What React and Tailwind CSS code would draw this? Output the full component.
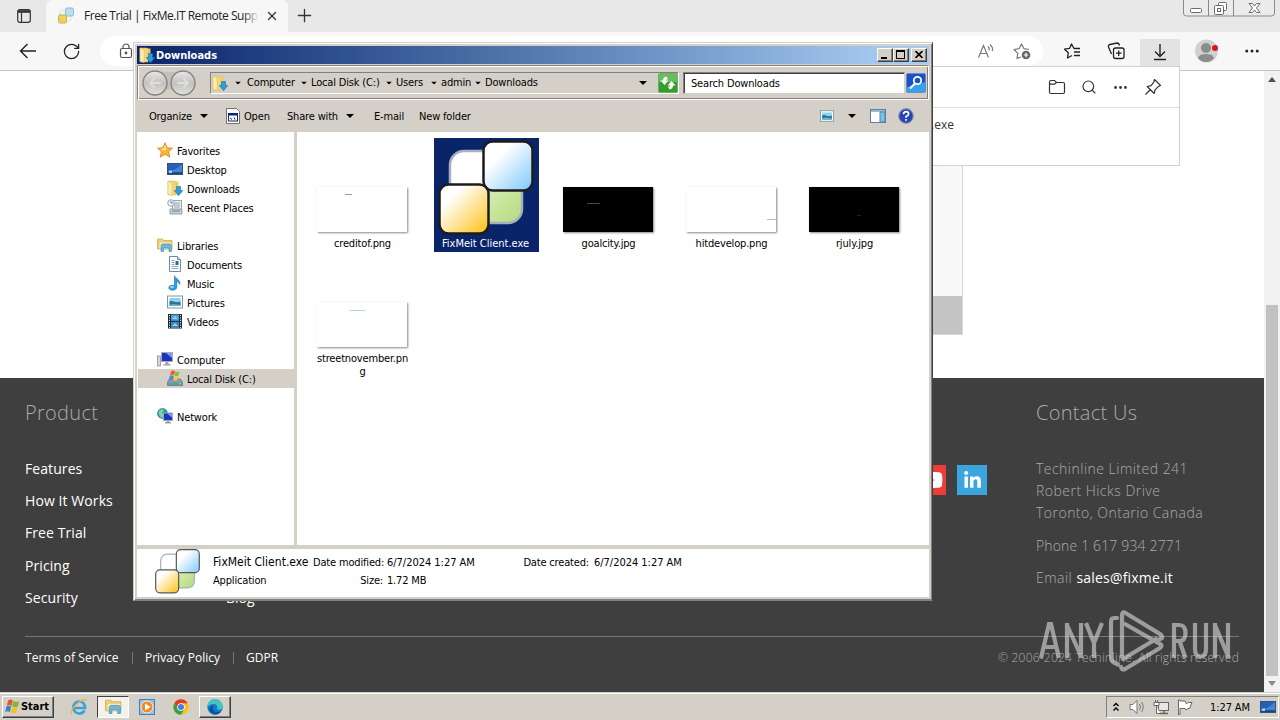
import { RotateCw, X, Plus, Search, Ellipsis } from 'lucide-react';
import { FaLinkedinIn, FaYoutube } from 'react-icons/fa';

const UI = "font-['DejaVu_Sans_Condensed','DejaVu_Sans',sans-serif] [font-stretch:condensed] text-[11px] tracking-[-0.170px] leading-[13px] whitespace-nowrap text-black";
const RAISED = 'border border-t-white border-l-white border-r-[#404040] border-b-[#404040] shadow-[inset_-1px_-1px_0_#808080] bg-[#d4d0c8]';

/* ---------- icons ---------- */

function FixMeLogo({ className, id, dark = '#1c1c1c' }) {
  return (
    <svg viewBox="0 0 96 96" className={className}>
      <defs>
        <linearGradient id={`${id}-b`} x1="0" y1="0" x2="1" y2="1">
          <stop offset=".3" stopColor="#fff" />
          <stop offset="1" stopColor="#7cc8fa" />
        </linearGradient>
        <linearGradient id={`${id}-y`} x1="0" y1="0" x2="1" y2="1">
          <stop offset=".25" stopColor="#fff" />
          <stop offset="1" stopColor="#fcc010" />
        </linearGradient>
        <linearGradient id={`${id}-g`} x1="0" y1="0" x2="1" y2="1">
          <stop offset=".5" stopColor="#fff" />
          <stop offset=".52" stopColor="#d8edb4" />
          <stop offset="1" stopColor="#b4da7c" />
        </linearGradient>
      </defs>
      <rect x="12" y="11" width="72" height="72" rx="14" fill={`url(#${id}-g)`} stroke="#a9aec0" strokeWidth="2.5" />
      <rect x="45.5" y="1.5" width="49" height="49" rx="9" fill={`url(#${id}-b)`} stroke={dark} strokeWidth="2.5" />
      <rect x="1.5" y="44.5" width="49" height="49" rx="9" fill={`url(#${id}-y)`} stroke={dark} strokeWidth="2.5" />
    </svg>
  );
}

function TabLogo() {
  return (
    <svg viewBox="0 0 18 18" className="size-[18px]">
      <rect x="3" y="3" width="11" height="11" rx="2" fill="#f3f5ee" stroke="#e0e3dc" />
      <rect x="8.500" y="1" width="8" height="8" rx="1.500" fill="#b9def1" stroke="#91bdd3" />
      <rect x="1.500" y="8" width="8" height="8" rx="1.500" fill="#f3d05c" stroke="#c9b055" />
    </svg>
  );
}

function DownloadsIcon() {
  return (
    <svg viewBox="0 0 16 16" className="size-4">
      <path d="M1 1h7l1 1v13H1z" fill="#f3d675" stroke="#d9b95f" strokeWidth=".6" />
      <path d="M1 1l4 2v12.500L1 14z" fill="#fdeeb0" stroke="#dfc472" strokeWidth=".6" />
      <path d="M8.500 1.500h3V9h-3z" fill="#edcd6b" />
      <path d="M9.500 6.500h4v4h2.300L11.500 15.700 7.300 10.500h2.200z" fill="#2f9be0" stroke="#1b6fb0" strokeWidth=".6" />
    </svg>
  );
}

function StarIcon() {
  return (
    <svg viewBox="0 0 16 16" className="size-4">
      <path d="M8 .8l2.200 4.900 5.300.5-4 3.600 1.300 5.300L8 12.300l-4.800 2.800 1.300-5.300-4-3.600 5.300-.5z" fill="#fbb634" stroke="#d87a14" strokeWidth=".8" />
      <path d="M8 3l1.400 3.600L8 9 3.500 7l3-.4z" fill="#fde293" />
    </svg>
  );
}

function DesktopIcon() {
  return (
    <svg viewBox="0 0 16 16" className="size-4">
      <rect x=".5" y="2.500" width="15" height="11" fill="#2560b8" stroke="#3a4f78" />
      <path d="M1 10C6 10 11 7 15 3v8H1z" fill="#3f86d4" />
      <path d="M1 11.500h14v1.500H1z" fill="#20427e" />
      <path d="M2 9.500h3v2.500H2z" fill="#a9cdf0" />
    </svg>
  );
}

function RecentIcon() {
  return (
    <svg viewBox="0 0 16 16" className="size-4">
      <rect x="5.500" y="1.500" width="9" height="11" fill="#eef2f5" stroke="#9ca6af" />
      <path d="M7 4h6M7 6h6M7 8h6" stroke="#8fa0b0" />
      <path d="M3 10h12v5H3z" fill="#c6d0d7" stroke="#808d97" strokeWidth=".8" />
      <path d="M5 12h8" stroke="#6d7c87" />
      <circle cx="4" cy="4" r="3.300" fill="#eef3f8" stroke="#9ca9b5" />
      <path d="M4 2v2h2" stroke="#567" fill="none" strokeWidth=".8" />
    </svg>
  );
}

function LibrariesIcon({ className = 'size-4' }) {
  return (
    <svg viewBox="0 0 16 16" className={className}>
      <path d="M.5 2h5l1 1.500h8.500V12H.5z" fill="#f2d272" stroke="#c9a646" strokeWidth=".7" />
      <path d="M2 5h12.500v7H2z" fill="#fbedb0" stroke="#d7b95f" strokeWidth=".5" />
      <path d="M4 9.500c0-2 1-2.500 2-2.500h6c1.500 0 2.500.5 2.500 2.500V14.500h-2.500V11H6.500v3.500H4z" fill="#6bb7dd" stroke="#3d86ad" strokeWidth=".6" />
    </svg>
  );
}

function DocumentsIcon() {
  return (
    <svg viewBox="0 0 16 16" className="size-4">
      <path d="M2.500.5h8l3 3v12h-11z" fill="#fff" stroke="#75879a" />
      <path d="M10.500.5v3h3" fill="#d9e4ee" stroke="#75879a" />
      <path d="M4.500 4.500h3M4.500 6.500h3M4.500 8.500h3M4.500 10.500h7M4.500 12.500h7" stroke="#8fabc4" />
      <rect x="8.500" y="5" width="3" height="4" fill="#2768a8" />
    </svg>
  );
}

function MusicIcon() {
  return (
    <svg viewBox="0 0 16 16" className="size-4">
      <path d="M7.500.8c1 3.200 6 3.400 5.300 8.700-.6-1.800-1.800-2.600-3-2.800v5.500c0 3.800-8 4-8 .6 0-2.600 3.500-3 5.700-2.200z" fill="#2f9be4" stroke="#1a6cb4" strokeWidth=".6" />
      <ellipse cx="5" cy="12" rx="2" ry="1.100" fill="#a5dafa" />
    </svg>
  );
}

function PicturesIcon({ className = 'size-4' }) {
  return (
    <svg viewBox="0 0 16 16" className={className}>
      <rect x=".5" y="2" width="15" height="12" fill="#fff" stroke="#7d97a8" />
      <rect x="2.500" y="4" width="11" height="8" fill="#8ed0ef" />
      <path d="M2.500 7.500c3-2 6 2.500 11 0V12h-11z" fill="#2c7597" />
      <path d="M2.500 10.800c4-1.500 7 0 11 0V12h-11z" fill="#70b9d0" />
    </svg>
  );
}

function VideosIcon() {
  return (
    <svg viewBox="0 0 16 16" className="size-4">
      <rect x="1" y="1" width="14" height="14.500" fill="#1f2a33" />
      <rect x="4" y="1.500" width="8" height="6.300" fill="#4f9fd4" />
      <rect x="4" y="8.800" width="8" height="6.300" fill="#3c88c0" />
      <path d="M5 6l3-3 3 3zM5 13l3-3 3 3z" fill="#8fd0ee" />
      <path d="M2.500 2v13M13.500 2v13" stroke="#dfe8ee" strokeDasharray="1.200 1.200" />
    </svg>
  );
}

function ComputerIcon() {
  return (
    <svg viewBox="0 0 16 16" className="size-4">
      <rect x=".5" y="5" width="3" height="10" fill="#d4d6da" stroke="#85898f" strokeWidth=".7" />
      <rect x="4.500" y="1.500" width="11" height="9" fill="#1d34c0" stroke="#a9acb5" />
      <path d="M9 2h6v5z" fill="#7d9cf3" />
      <path d="M8.500 11h3v2h2v1.500h-7V13h2z" fill="#9fa2a8" />
    </svg>
  );
}

function DiskIcon() {
  return (
    <svg viewBox="0 0 16 16" className="size-4">
      <path d="M2.500 9h11l2 3v3.500H.5V12z" fill="#8e9ca4" stroke="#54626a" strokeWidth=".6" />
      <path d="M1 12.500h14v2.500H1z" fill="#5d9cab" />
      <path d="M12 13.700h2" stroke="#7cf06c" />
      <path d="M4 1.200c1.500-1 2.500-1 4 0L7 5.200c-1.500-1-2.500-1-4 0z" fill="#ec5a24" />
      <path d="M8.500 1.500c1.500 1 2.500 1 4 0l-1 4c-1.500 1-2.500 1-4 0z" fill="#85bd36" />
      <path d="M2.800 6c1.500-1 2.500-1 4 0l-1 3.800c-1.500-1-2.500-1-4 0z" fill="#3f8de0" />
      <path d="M7.300 6.300c1.500 1 2.500 1 4 0l-1 3.700c-1.500 1-2.500 1-4 0z" fill="#fbc729" />
    </svg>
  );
}

function NetworkIcon() {
  return (
    <svg viewBox="0 0 16 16" className="size-4">
      <circle cx="5.500" cy="5.500" r="5" fill="#2b98b8" stroke="#1f6d93" strokeWidth=".6" />
      <path d="M2 3c2-2 4-2 5-1L5 5l2 2-2 3C3 9 1 6 2 3z" fill="#7fd59a" />
      <rect x="6.500" y="5" width="9" height="7.500" fill="#1d34c0" stroke="#a9acb5" />
      <path d="M10 5.500h5v4z" fill="#7d9cf3" />
      <path d="M9.500 13h3v1h1.500v1.500h-6V14h1.500z" fill="#9fa2a8" />
    </svg>
  );
}

function Caret({ className = '' }) {
  return (
    <svg viewBox="0 0 8 4" className={`h-1 w-2 ${className}`}>
      <path d="M0 0h8L4 4z" fill="#000" />
    </svg>
  );
}

function WindowsFlag({ className }) {
  return (
    <svg viewBox="0 0 16 16" className={className}>
      <path d="M3.300 1.500c2-1.300 3.500-1 5 0L7 7.300c-1.500-1-3-1.200-5 0z" fill="#ea5426" />
      <path d="M8.800 2c1.600 1 3.500 1.300 6.500.2L13.800 8c-2 1-4.300.9-6.200-.2z" fill="#7fba35" />
      <path d="M1.500 8c2-1.200 3.600-1 5 0l-1.300 5.800c-1.500-1-3-1.200-5 0z" fill="#2f84dc" />
      <path d="M7.300 8.500c1.600 1 3.700 1.200 6 .2L12 14.500c-2 1-4 .9-6-.2z" fill="#fbbf1d" />
    </svg>
  );
}

/* ---------- browser ---------- */

function TabStrip() {
  return (
    <div className="flex h-8 bg-[#e8e8e8]">
      <div className="flex w-[46px] items-center justify-center rounded-br-md pl-[2px]">
        <svg viewBox="0 0 14 14" className="size-[14px]" fill="none" stroke="#333" strokeWidth="1.200">
          <rect x=".7" y=".7" width="12.600" height="12.600" rx="2" />
          <path d="M1 2.500h12" strokeWidth="2.600" />
          <path d="M4.500 3v10" />
        </svg>
      </div>
      <div className="flex w-[242px] items-center rounded-t-md bg-[#f7f7f7] pl-[11px]">
        <TabLogo />
        <div className="relative ml-[9px] w-[175px] font-['Open_Sans',sans-serif] text-[12px] tracking-[-0.470px] whitespace-nowrap text-[#222]">
          Free Trial | FixMe.IT Remote Supp
          <div className="absolute inset-y-0 right-0 w-4 bg-gradient-to-r from-transparent to-[#f7f7f7]" />
        </div>
        <X className="ml-[6px] size-[14px] text-[#333]" strokeWidth={2.200} />
      </div>
      <Plus className="mt-[5px] ml-[6px] size-[21px] text-[#333]" strokeWidth={1.500} />
      <svg viewBox="0 0 94 18" className="mr-[4px] ml-auto h-[18px] w-[94px]" fill="none" stroke="#6b6b6b">
        <path d="M1.500 0v13q0 3 3 3h85q3 0 3-3V0M26.500 0v16M51.500 0v16" fill="#ebebeb" stroke="#8a8a8a" />
        <rect x="8.500" y="8.500" width="11" height="4" rx="1" fill="#fff" />
        <rect x="36.500" y="2.500" width="8" height="8" rx="1" fill="#fff" />
        <rect x="32.500" y="5.500" width="9" height="9" rx="1" fill="#fff" />
        <rect x="35.500" y="8.500" width="3" height="3" />
        <path d="M67 3.500h3.500l2 2.500 2-2.500H78l-3.500 4.500 3.500 4.500h-3.500l-2-2.500-2 2.500H67l3.500-4.500z" fill="#fff" />
      </svg>
    </div>
  );
}

function Toolbar() {
  return (
    <div className="flex h-[39px] items-center border-b border-[#c4c4c4] bg-[#f7f7f7]">
      <svg viewBox="0 0 18 16" className="ml-[19px] h-4 w-[18px]" fill="none" stroke="#222" strokeWidth="1.400">
        <path d="M17 8H1.500M8.500 1L1.500 8l7 7" />
      </svg>
      <RotateCw className="ml-[25px] size-[19px] text-[#222]" strokeWidth={1.600} />
      <div className="ml-[19px] flex h-[30px] w-[943px] items-center rounded-full bg-white">
        <svg viewBox="0 0 14 16" className="ml-[19px] h-4 w-[14px]" fill="none" stroke="#555" strokeWidth="1.200">
          <rect x="1.500" y="5.500" width="11" height="9" rx="1.500" />
          <path d="M4 5.500V4a3 3 0 016 0v1.500" />
          <circle cx="7" cy="10" r=".8" fill="#555" />
        </svg>
        <svg viewBox="0 0 18 16" className="ml-auto h-4 w-[18px]" fill="none" stroke="#777" strokeWidth="1.200">
          <path d="M1.500 14.500L6.500 2.500l5 12M3.200 10.500h6.600M11 3.500q1.700 1.500 1.200 4M13 1.500q3.500 3 2.300 6.500" />
        </svg>
        <svg viewBox="0 0 18 18" className="mr-[12px] ml-[18px] size-[18px]" fill="none" stroke="#777" strokeWidth="1.200">
          <path d="M8 15l-4 1.500.8-5.200L1 7.500l5-.8L8.500 2 11 6.700l5 .8" strokeLinejoin="round" />
          <circle cx="13" cy="13" r="4.300" fill="#666" stroke="none" />
          <path d="M13 10.800v4.400M10.800 13h4.400" stroke="#fff" />
        </svg>
      </div>
      <svg viewBox="0 0 18 18" className="ml-[20px] size-[18px]" fill="none" stroke="#222" strokeWidth="1.300" strokeLinejoin="round">
        <path d="M9 13.500l-4.500 2.500.8-5.200L1.500 7.200l5-.8L8.500 2 11 6.500h6M11 10h6M11 13.500h6" />
      </svg>
      <svg viewBox="0 0 18 18" className="ml-[26px] size-[18px]" fill="none" stroke="#222" strokeWidth="1.300">
        <rect x="6.500" y="6" width="10.500" height="10.500" rx="2" />
        <path d="M11.700 8.500v5.500M9 11.200h5.500M4.500 12L1.500 5q-.5-2 1.500-2.500L10 1q2 0 2.500 2.500" />
      </svg>
      <div className="ml-[15px] flex h-[31px] w-10 items-center justify-center self-end bg-[#e3e3e3] pb-[6px]">
        <svg viewBox="0 0 14 18" className="h-[18px] w-[14px]" fill="none" stroke="#222" strokeWidth="1.400">
          <path d="M7 1v12M2 8.500l5 5 5-5M1 16.500h12" />
        </svg>
      </div>
      <svg viewBox="0 0 24 24" className="ml-[15px] size-6">
        <circle cx="11.500" cy="12" r="11.500" fill="#d0d0d0" />
        <circle cx="11" cy="9" r="5" fill="#8c8c8c" />
        <path d="M3 19q1-4 8-4t8 4q-3 4-8 4t-8-4z" fill="#8c8c8c" />
        <circle cx="20" cy="9" r="3" fill="#e3131b" />
      </svg>
      <Ellipsis className="ml-[24px] size-[18px] text-[#222]" strokeWidth={2} />
    </div>
  );
}

function DownloadsFlyout() {
  return (
    <div className="absolute top-[66px] left-[820px] h-[100px] w-[360px] border border-[#d0d0d0] bg-white">
      <div className="flex h-[41px] items-center justify-end gap-[15px] border-b border-[#dedede] pr-[17px] text-[#333]">
        <svg viewBox="0 0 18 16" className="h-4 w-[18px]" fill="none" stroke="#333" strokeWidth="1.200">
          <path d="M1.500 4V3q0-1.500 1.500-1.500h3.500L8.500 3.500H15q1.500 0 1.500 1.500v8q0 1.500-1.500 1.500H3q-1.500 0-1.500-1.500zM1.500 5.200h5l2-1.700" />
        </svg>
        <Search className="size-[16px]" strokeWidth={1.700} />
        <Ellipsis className="size-[17px]" strokeWidth={2} />
        <svg viewBox="0 0 18 18" className="size-[18px]" fill="none" stroke="#333" strokeWidth="1.200" strokeLinejoin="round">
          <path d="M10.500 1.500l6 6-2.500 1.300-3 3-.8 3.700-7-7 3.800-.8 2.500-3zM6.500 11.500l-5 5" />
        </svg>
      </div>
      <div className="pt-[8px] pl-[110px] font-['Open_Sans',sans-serif] text-[12px] text-[#333]">.exe</div>
    </div>
  );
}

const PRODUCT_LINKS = ['Features', 'How It Works', 'Free Trial', 'Pricing', 'Security'];

function Footer() {
  return (
    <footer className="h-[314px] bg-[#3f3f3f] px-[25px] font-['Open_Sans',sans-serif] font-light text-[#ababab]">
      <div className="flex h-[259px] border-b border-[#777] pt-[20px]">
        <div className="w-[201px]">
          <h3 className="text-[20px] leading-[30px] tracking-[0.300px]">Product</h3>
          <ul className="pt-[25px] text-[14px] leading-[32.200px] font-normal tracking-[0.080px] text-white">
            {PRODUCT_LINKS.map((l) => (
              <li key={l}>{l}</li>
            ))}
          </ul>
        </div>
        <div className="pt-[184px] text-[14px] leading-[32px] font-normal text-white">Blog</div>
        <div className="mt-[67px] mr-[49px] ml-auto flex gap-[11px]">
          <div className="flex size-[30px] items-center justify-center bg-[#ee3d36]">
            <FaYoutube className="size-[24px] text-white" />
          </div>
          <div className="flex size-[30px] items-center justify-center bg-[#3aa5de]">
            <FaLinkedinIn className="size-[19px] text-white" />
          </div>
        </div>
        <div className="w-[203px] text-[14px] tracking-[0.480px]">
          <h3 className="text-[20px] leading-[30px] tracking-[0.300px]">Contact Us</h3>
          <p className="pt-[30px] leading-[22px]">
            Techinline Limited 241
            <br />
            Robert Hicks Drive
            <br />
            Toronto, Ontario Canada
          </p>
          <p className="pt-[11px] leading-[22px] tracking-[0.150px]">Phone 1 617 934 2771</p>
          <p className="pt-[10px] leading-[22px]">
            Email <span className="font-normal tracking-[0.200px] text-white">sales@fixme.it</span>
          </p>
        </div>
      </div>
      <div className="flex h-[42px] items-center text-[12px] font-normal text-white">
        <span className="w-[107px] tracking-[0.080px]">Terms of Service</span>
        <span className="h-3 w-[13px] border-l border-[#777]" />
        <span className="w-[88px]">Privacy Policy</span>
        <span className="h-3 w-[13px] border-l border-[#777]" />
        <span>GDPR</span>
        <span className="ml-auto font-light tracking-[0.210px] text-[#ababab]">© 2006-2024 Techinline. All rights reserved</span>
      </div>
    </footer>
  );
}

function Page() {
  return (
    <div className="flex h-[621px]">
      <div className="flex w-[1264px] flex-col bg-white">
        <div className="h-[307px]">
          <div className="ml-[600px] flex h-[264px] w-[363px] flex-col justify-end border border-[#d6d6d6] bg-[#f9f9f9]">
            <div className="h-[38px] bg-[#c5c5c5]" />
          </div>
        </div>
        <Footer />
      </div>
      <div className="flex w-4 flex-col items-center bg-[#f2f2f2] pt-[6px]">
        <svg viewBox="0 0 8 5" className="h-[5px] w-2">
          <path d="M0 5L4 0l4 5z" fill="#505050" />
        </svg>
        <div className="mt-[223px] h-[371px] w-3 bg-[#c1c1c1]" />
        <svg viewBox="0 0 8 5" className="mt-[5px] h-[5px] w-2">
          <path d="M0 0l4 5 4-5z" fill="#888" />
        </svg>
      </div>
    </div>
  );
}

/* ---------- explorer window ---------- */

const CRUMBS = [
  { label: 'Computer', w: 'w-[64px]' },
  { label: 'Local Disk (C:)', w: 'w-[85px]' },
  { label: 'Users', w: 'w-[45px]' },
  { label: 'admin', w: 'w-[44px]' },
  { label: 'Downloads', w: 'w-[60px]' },
];

const TREE = [
  { label: 'Favorites', Icon: StarIcon, root: true },
  { label: 'Desktop', Icon: DesktopIcon },
  { label: 'Downloads', Icon: DownloadsIcon },
  { label: 'Recent Places', Icon: RecentIcon },
  null,
  { label: 'Libraries', Icon: LibrariesIcon, root: true },
  { label: 'Documents', Icon: DocumentsIcon },
  { label: 'Music', Icon: MusicIcon },
  { label: 'Pictures', Icon: PicturesIcon },
  { label: 'Videos', Icon: VideosIcon },
  null,
  { label: 'Computer', Icon: ComputerIcon, root: true },
  { label: 'Local Disk (C:)', Icon: DiskIcon, selected: true },
  null,
  { label: 'Network', Icon: NetworkIcon, root: true },
];

const FILES = [
  { name: 'creditof.png', bg: 'bg-white', mark: 'ml-[28px] mt-[7px] w-[7px] bg-[#999]' },
  { name: 'FixMeit Client.exe', app: true },
  { name: 'goalcity.jpg', bg: 'bg-black', mark: 'ml-[24px] mt-[16px] w-[13px] bg-[#484848]' },
  { name: 'hitdevelop.png', bg: 'bg-white', mark: 'ml-[81px] mt-[32px] w-[9px] bg-[#bbb]' },
  { name: 'rjuly.jpg', bg: 'bg-black', mark: 'ml-[48px] mt-[28px] w-[4px] bg-[#222]' },
  { name: 'streetnovember.png', bg: 'bg-white', mark: 'ml-[33px] mt-[8px] w-[15px] bg-[#b5d5d2]' },
];

function TitleBar() {
  return (
    <div className="flex h-[18px] items-center bg-gradient-to-r from-[#0a246a] to-[#a6caf0] to-95% pr-[2px] pl-[2px]">
      <DownloadsIcon />
      <span className="ml-[1px] pt-[2px] font-['DejaVu_Sans_Condensed','DejaVu_Sans',sans-serif] [font-stretch:condensed] text-[11px] font-bold tracking-[0px] text-white">Downloads</span>
      <div className="ml-auto flex">
        <div className={`h-[14px] w-4 ${RAISED}`}>
          <div className="mt-[8px] ml-[3px] h-[2px] w-[6px] bg-black" />
        </div>
        <div className={`h-[14px] w-4 ${RAISED}`}>
          <div className="mt-[1px] ml-[2px] h-[9px] w-[9px] border border-t-2 border-black" />
        </div>
        <div className={`ml-[2px] h-[14px] w-4 ${RAISED}`}>
          <svg viewBox="0 0 8 7" className="mt-[2px] ml-[3px] h-[7px] w-2">
            <path d="M.5 0l7 7M7.500 0l-7 7" stroke="#000" strokeWidth="1.600" />
          </svg>
        </div>
      </div>
    </div>
  );
}

function NavButtons() {
  return (
    <svg viewBox="0 0 56 28" className="h-[28px] w-[56px]">
      <defs>
        <linearGradient id="nav" x1="0" y1="0" x2="0" y2="1">
          <stop offset="0" stopColor="#e8e8e6" />
          <stop offset=".5" stopColor="#c2c1be" />
          <stop offset="1" stopColor="#e2e1de" />
        </linearGradient>
      </defs>
      <path d="M14 3h28v20q-14-5-28 0z" fill="#c3c1bc" />
      <circle cx="14" cy="14" r="12" fill="url(#nav)" stroke="#85847f" strokeWidth="1.400" />
      <circle cx="42" cy="14" r="12" fill="url(#nav)" stroke="#85847f" strokeWidth="1.400" />
      <path d="M20 14H9M13.500 9.500L9 14l4.500 4.500M36 14h11M42.500 9.500L47 14l-4.500 4.500" fill="none" stroke="#dededb" strokeWidth="2" />
    </svg>
  );
}

function AddressRow() {
  return (
    <div className="mt-[1px] flex h-[35px] items-center border border-[#808080] border-r-white border-b-white shadow-[inset_1px_1px_0_#fff,inset_-1px_-1px_0_#808080]">
      <div className="ml-[3px]">
        <NavButtons />
      </div>
      <div className="ml-[13px] flex h-[22px] w-[469px] items-center border border-[#808080] border-r-white border-b-white pl-[1px]">
        <DownloadsIcon />
        <Caret className="mr-[2px] ml-[6px] scale-75" />
        {CRUMBS.map((c, i) => (
          <div key={c.label} className={`flex items-center pl-[3px] ${c.w} ${UI}`}>
            {c.label}
            {i < CRUMBS.length - 1 && <Caret className="ml-auto scale-75" />}
          </div>
        ))}
        <Caret className="mr-[11px] ml-auto" />
        <svg viewBox="0 0 20 20" className="size-5">
          <rect x=".5" y=".5" width="19" height="19" rx="1.500" fill="#33a02c" stroke="#6fae6a" />
          <path d="M1 1h18v8H1z" fill="#68bd5d" />
          <path d="M8.500 3.500Q5 4 5 7.500H2.500L6.500 12l4-4.500H8V6.500h2zM11.500 16.500q3.500-.5 3.500-4h2.500L13.500 8l-4 4.500H12v1h-2z" fill="#fff" />
        </svg>
      </div>
      <div className={`ml-[4px] flex h-[22px] w-[222px] items-center border border-[#808080] border-r-[#d4d0c8] border-b-[#d4d0c8] bg-white pt-px pl-[7px] shadow-[inset_1px_1px_0_#404040] ${UI}`}>
        Search Downloads
      </div>
      <svg viewBox="0 0 20 20" className="ml-[1px] size-5">
        <rect x=".5" y=".5" width="19" height="19" rx="1.500" fill="#1a50c8" stroke="#6a8cc8" />
        <path d="M1 14q9-2 18-5v10H1z" fill="#35a2ea" />
        <circle cx="11.500" cy="7.500" r="3.700" fill="none" stroke="#fff" strokeWidth="1.800" />
        <path d="M9 10.500l-5 5" stroke="#fff" strokeWidth="2.200" />
      </svg>
    </div>
  );
}

function CommandBar() {
  return (
    <div className={`flex h-[31px] items-center pt-px pl-[12px] ${UI}`}>
      <span className="w-[51px]">Organize</span>
      <Caret />
      <svg viewBox="0 0 14 16" className="mr-[4px] ml-[18px] h-4 w-[14px]">
        <path d="M.5.5h10l3 3v12H.5z" fill="#fff" stroke="#70706c" />
        <rect x="2.500" y="5.500" width="9" height="7.500" fill="#fff" stroke="#10257c" />
        <path d="M2 6.500h10" stroke="#10257c" strokeWidth="2" />
        <path d="M4 10l2 1.500M8 9.500l1 2" stroke="#10257c" />
      </svg>
      <span className="w-[43px]">Open</span>
      <span className="w-[59px]">Share with</span>
      <Caret />
      <span className="ml-[20px] w-[45px]">E-mail</span>
      <span>New folder</span>
      <div className="mr-[15px] ml-auto flex items-center">
        <PicturesIcon className="size-[14px]" />
        <Caret className="mr-[14px] ml-[14px]" />
        <svg viewBox="0 0 16 14" className="mr-[12px] h-[14px] w-4">
          <rect x=".5" y=".5" width="15" height="13" fill="#fff" stroke="#5c7fa6" />
          <path d="M1 2h14" stroke="#9cb8d4" strokeWidth="2" />
          <path d="M10 3h5v10h-5z" fill="#7fc2e2" stroke="#4a86b4" />
        </svg>
        <svg viewBox="0 0 16 16" className="size-4">
          <circle cx="8" cy="8" r="7.300" fill="#2845ad" stroke="#8792bd" strokeWidth="1.200" />
          <path d="M5.500 6.200q0-2.500 2.600-2.500t2.500 2.200Q10.600 7.500 8 8.500v1.200M8 11v1.700" fill="none" stroke="#fff" strokeWidth="1.700" />
        </svg>
      </div>
    </div>
  );
}

function FolderTree() {
  return (
    <div className="w-[157px] shrink-0 bg-white pt-[9px]">
      {TREE.map((n, i) =>
        n ? (
          <div key={i} className={`ml-px flex h-[19px] items-center gap-1 pb-px ${UI} ${n.root ? 'pl-[19px]' : 'pl-[29px]'} ${n.selected ? 'bg-[#d4d0c8]' : ''}`}>
            <n.Icon />
            <span className="pt-[3px]">{n.label}</span>
          </div>
        ) : (
          <div key={i} className="h-[19px]" />
        )
      )}
    </div>
  );
}

function FileTile({ file }) {
  return (
    <div className={`flex h-[114px] w-[105px] flex-col items-center ${file.app ? 'ml-px bg-[#0a246a]' : ''}`}>
      <div className="flex h-[99px] shrink-0 items-end pr-[2px]">
        {file.app ? (
          <FixMeLogo id="tile" className="mb-px size-24" />
        ) : (
          <div className={`mb-[5px] h-[45px] w-[90px] shadow-[1px_1px_2px_0_#888] ${file.bg}`}>
            <div className={`absolute h-px ${file.mark}`} />
          </div>
        )}
      </div>
      <div className={`w-[95px] text-center ${UI} whitespace-normal! break-all ${file.app ? 'pr-[2px] text-white! tracking-[0px]!' : ''}`}>{file.name}</div>
    </div>
  );
}

function DetailsPane() {
  return (
    <div className={`flex h-[48px] bg-white pl-[18px] ${UI}`}>
      <FixMeLogo id="details" dark="#555" className="size-[45px]" />
      <div className="ml-[13px] grid grid-cols-[100px_70px_140px_66px_auto] grid-rows-[18px_18px] items-center gap-x-0 pt-[4px]">
        <span className="text-[12px] tracking-[0.020px]">FixMeit Client.exe</span>
        <span className="text-right">Date modified:</span>
        <span className="pl-[4px] tracking-[-0.030px]">6/7/2024 1:27 AM</span>
        <span className="text-right">Date created:</span>
        <span className="pl-[5px] tracking-[-0.030px]">6/7/2024 1:27 AM</span>
        <span>Application</span>
        <span className="text-right">Size:</span>
        <span className="pl-[4px]">1.72 MB</span>
      </div>
    </div>
  );
}

function ExplorerWindow() {
  return (
    <div className="absolute top-[42px] left-[133px] h-[559px] w-[800px] border border-[#d4d0c8] border-r-[#404040] border-b-[#808080] bg-[#d4d0c8] p-[3px] shadow-[inset_1px_1px_0_#fff,inset_-1px_-1px_0_#808080]">
      <TitleBar />
      <AddressRow />
      <CommandBar />
      <div className="mt-px flex h-[413px]">
        <FolderTree />
        <div className="ml-[3px] flex grow flex-wrap content-start gap-x-[18px] gap-y-px bg-white pt-[6px] pl-[13px]">
          {FILES.map((f) => (
            <div key={f.name} className="h-[114px] w-[105px]">
              <FileTile file={f} />
            </div>
          ))}
        </div>
      </div>
      <div className="h-[4px]" />
      <DetailsPane />
    </div>
  );
}

/* ---------- taskbar ---------- */

function Taskbar() {
  return (
    <div className="flex h-[28px] items-center border-t border-[#d4d0c8] bg-[#d4d0c8] pl-[2px] shadow-[inset_0_1px_0_#fff]">
      <div className={`flex h-[22px] w-[52px] items-center gap-px pl-[2px] ${RAISED}`}>
        <WindowsFlag className="size-[15px]" />
        <span className="pt-px font-['DejaVu_Sans_Condensed','DejaVu_Sans',sans-serif] [font-stretch:condensed] text-[11px] font-bold tracking-[-0.050px] text-black">Start</span>
      </div>
      <svg viewBox="0 0 18 18" className="ml-[16px] size-[18px]" fill="none">
        <path d="M14.500 12.500A6 6 0 119 3.500q5.800 0 6 6.500H4" stroke="#36a3e0" strokeWidth="2.600" />
        <path d="M2 16.500Q-1 13 7 6T16.500 2.500" stroke="#e7b93a" strokeWidth="1.300" />
      </svg>
      <div className="ml-[9px] flex h-[22px] w-[32px] items-center justify-center border border-[#404040] border-r-white border-b-white bg-[#f3f2ef]">
        <LibrariesIcon className="size-[17px]" />
      </div>
      <svg viewBox="0 0 16 16" className="ml-[10px] size-4">
        <rect x=".5" y=".5" width="15" height="15" fill="#8fc3ea" stroke="#3e7fc0" />
        <circle cx="8" cy="8" r="6" fill="#f58a1e" stroke="#fff" strokeWidth=".8" />
        <path d="M6 4.500l5.500 3.500L6 11.500z" fill="#fff" />
      </svg>
      <svg viewBox="0 0 16 16" className="ml-[18px] size-4">
        <circle cx="8" cy="8" r="7.700" fill="#fbc116" />
        <path d="M1.300 4.200A7.700 7.700 0 0114.700 4.200H8L4.700 9.900z" fill="#e23b2e" />
        <path d="M1.300 4.200L4.700 9.900 8 11.800l3.300-1.900L8 15.700A7.700 7.700 0 011.300 4.200z" fill="#2da34e" />
        <circle cx="8" cy="8" r="3.800" fill="#fff" />
        <circle cx="8" cy="8" r="3" fill="#3f7fe8" />
      </svg>
      <div className={`ml-[10px] flex h-[22px] w-[32px] items-center justify-center ${RAISED}`}>
        <svg viewBox="0 0 16 16" className="size-4">
          <circle cx="8" cy="8" r="7.700" fill="#1477c8" />
          <path d="M.5 7A7.600 7.600 0 0115.700 8c0 3-4.700 3.500-5.900 1.800C11 8 10 4.800 6.500 5 4 5 1.500 6 .5 8z" fill="#45c5c0" />
          <path d="M6 8c-1 4 3 6.500 8 4.500-3 4.500-9 3.500-11-.5C2 9 4 6.500 6.500 6.800z" fill="#0c4f9f" />
        </svg>
      </div>
      <div className={`mr-[1px] ml-auto flex h-[22px] w-[173px] items-center border border-[#808080] border-r-white border-b-white pl-[5px] ${UI}`}>
        <svg viewBox="0 0 8 10" className="h-[10px] w-2" fill="none" stroke="#000" strokeWidth="1.400">
          <path d="M1.500 4L4 1.500 6.500 4M1.500 8.500L4 6l2.500 2.500" />
        </svg>
        <svg viewBox="0 0 17 16" className="ml-[9px] h-4 w-[17px]" fill="none" stroke="#777">
          <path d="M1 5.500h3l4-4v13l-4-4H1z" fill="#fff" />
          <path d="M10.500 5q2 3 0 6M12.500 3q3.500 5 0 10" />
        </svg>
        <svg viewBox="0 0 16 16" className="ml-[7px] size-4" fill="none" stroke="#666">
          <rect x="5.500" y="3.500" width="10" height="8" fill="#e6e6e6" />
          <path d="M7 14.500h8M11 12v2" strokeWidth="1.500" />
          <path d="M1 3.500h5v3H1zM2.500 1v2M4.500 1v2M3.500 7v7.500H7" fill="#fff" />
        </svg>
        <svg viewBox="0 0 16 16" className="ml-[8px] size-4" fill="#fff" stroke="#666">
          <path d="M1.500 1v14.500H3V9.500h5l1 1.500 2-1.500h1.500L15 3.500h-4L9.500 5 8 2H3V1z" />
        </svg>
        <span className="ml-[17px] pt-px tracking-[-0.100px]">1:27 AM</span>
        <div className="mr-[2px] ml-auto">
          <DesktopIcon />
        </div>
      </div>
    </div>
  );
}

function Watermark() {
  return (
    <div className="absolute top-[608px] left-[1038px] opacity-60">
      <svg viewBox="0 0 194 66" className="h-[66px] w-[194px]" fill="none" stroke="#dcdcdc" strokeWidth="4.200">
        <path d="M3 50L11 16h2l8 34M6.500 39h11M29 50V15M29 17l14 31M43 50V15M48 15l8 20v15M64 15l-8 20" />
        <path d="M79 10h-3q-3 0-3 4v35q0 4 3 5.500l4 2M84 49V7q0-4 3.500-2L122 26q2.500 2 2 4l-2.500 1.500" strokeLinecap="round" />
        <path d="M87 16l35 20q3 1.500 0 4L87 61q-3 1.500-4-2M85 51l33-20" strokeLinecap="round" strokeLinejoin="round" />
        <path d="M136 50V17h5q6.500 0 6.500 8t-6.500 8h-5M141.500 33l6 17M157 15v26q0 7.500 5.500 7.500T168 41V15M177 50V15M177 17l13 31M190 50V15" />
      </svg>
    </div>
  );
}

export default function App() {
  return (
    <div className="relative h-[720px] w-[1280px] overflow-hidden bg-white">
      <TabStrip />
      <Toolbar />
      <Page />
      <DownloadsFlyout />
      <Taskbar />
      <Watermark />
      <ExplorerWindow />
    </div>
  );
}
